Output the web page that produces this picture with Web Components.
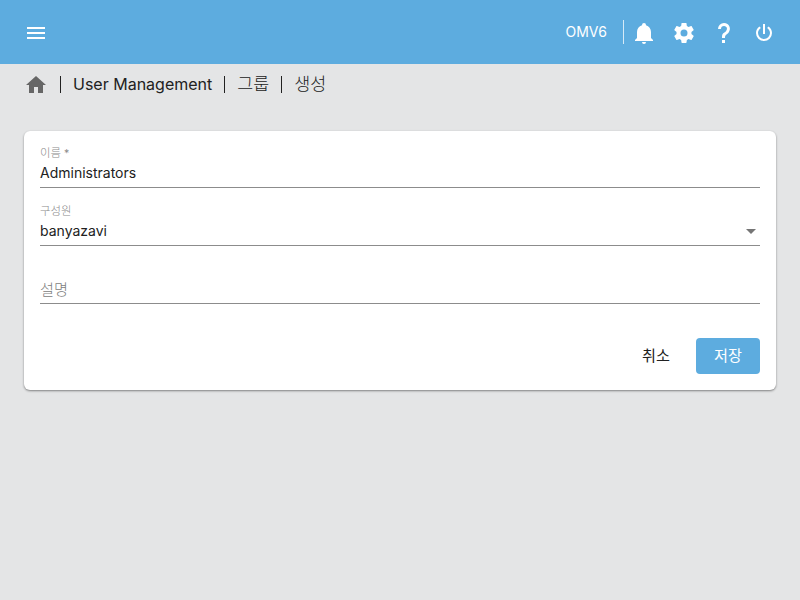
<!DOCTYPE html>
<html><head><meta charset="utf-8"><title>OMV</title>
<style>
html,body{margin:0;padding:0;height:100%}
body{background:#e4e5e6;font-family:Inter,"Noto Sans CJK KR",sans-serif;font-weight:375;color:#212121;overflow:hidden}
</style></head><body>
<omv-app></omv-app>
<script>
const K='.k{font-size:1.087em;font-weight:300}';
function def(name,html,setup){customElements.define(name,class extends HTMLElement{constructor(){super();this.attachShadow({mode:'open'}).innerHTML=html;}connectedCallback(){if(setup)setup(this)}})}
def('omv-icon',`<style>:host{display:block;width:24px;height:24px}svg{display:block;width:100%;height:100%;fill:currentColor}</style><svg viewBox="0 0 24 24"><path id="p"/></svg>`,el=>{el.shadowRoot.getElementById('p').setAttribute('d',el.getAttribute('d'))});
def('omv-topbar',`<style>:host{display:flex;align-items:center;height:64px;background:#5dacdf;color:#fff;padding:0 24px}
omv-icon{margin-top:2px}
.sp{flex:1}.host{font-size:14px;font-weight:400;line-height:20px;margin-right:16px}.div{width:1px;height:24px;background:rgba(255,255,255,.75);margin-right:8px}
.r{display:flex;gap:16px;align-items:center}</style>
<omv-icon d="M3 18h18v-2H3v2zm0-5h18v-2H3v2zm0-7v2h18V6H3z"></omv-icon><div class="sp"></div>
<span class="host">OMV6</span><div class="div"></div>
<div class="r">
<omv-icon d="M21,19V20H3V19L5,17V11C5,7.9 7.03,5.17 10,4.29C10,4.19 10,4.1 10,4A2,2 0 0,1 12,2A2,2 0 0,1 14,4C14,4.1 14,4.19 14,4.29C16.97,5.17 19,7.9 19,11V17L21,19M14,21A2,2 0 0,1 12,23A2,2 0 0,1 10,21"></omv-icon>
<omv-icon d="M12,15.5A3.5,3.5 0 0,1 8.5,12A3.5,3.5 0 0,1 12,8.5A3.5,3.5 0 0,1 15.5,12A3.5,3.5 0 0,1 12,15.5M19.43,12.97C19.47,12.65 19.5,12.33 19.5,12C19.5,11.67 19.47,11.34 19.43,11L21.54,9.37C21.73,9.22 21.78,8.95 21.66,8.73L19.66,5.27C19.54,5.05 19.27,4.96 19.05,5.05L16.56,6.05C16.04,5.66 15.5,5.32 14.87,5.07L14.5,2.42C14.46,2.18 14.25,2 14,2H10C9.75,2 9.54,2.18 9.5,2.42L9.13,5.07C8.5,5.32 7.96,5.66 7.44,6.05L4.95,5.05C4.73,4.96 4.46,5.05 4.34,5.27L2.34,8.73C2.21,8.95 2.27,9.22 2.46,9.37L4.57,11C4.53,11.34 4.5,11.67 4.5,12C4.5,12.33 4.53,12.65 4.57,12.97L2.46,14.63C2.27,14.78 2.21,15.05 2.34,15.27L4.34,18.73C4.46,18.95 4.73,19.03 4.95,18.95L7.44,17.94C7.96,18.34 8.5,18.68 9.13,18.93L9.5,21.58C9.54,21.82 9.75,22 10,22H14C14.25,22 14.46,21.82 14.5,21.58L14.87,18.93C15.5,18.67 16.04,18.34 16.56,17.94L19.05,18.95C19.27,19.03 19.54,18.95 19.66,18.73L21.66,15.27C21.78,15.05 21.73,14.78 21.54,14.63L19.43,12.97Z"></omv-icon>
<omv-icon d="M10,19H13V22H10V19M12,2C17.35,2.22 19.68,7.62 16.5,11.67C15.67,12.67 14.33,13.33 13.67,14.17C13,15 13,16 13,17H10C10,15.33 10,13.92 10.67,12.92C11.33,11.92 12.67,11.33 13.5,10.67C15.92,8.43 15.32,5.26 12,5A3,3 0 0,0 9,8H6A6,6 0 0,1 12,2Z"></omv-icon>
<omv-icon d="M16.56,5.44L15.11,6.89C16.84,7.94 18,9.83 18,12A6,6 0 0,1 12,18A6,6 0 0,1 6,12C6,9.83 7.16,7.94 8.88,6.88L7.44,5.44C5.36,6.88 4,9.28 4,12A8,8 0 0,0 12,20A8,8 0 0,0 20,12C20,9.28 18.64,6.88 16.56,5.44M13,3H11V13H13"></omv-icon>
</div>`);
def('omv-crumbs',`<style>${K}:host{display:flex;align-items:center;height:40px;padding:0 24px;font-size:16px;color:#212121}
omv-icon{color:#666;margin-right:12px;margin-top:2px}
.s{width:1px;height:17px;background:#212121;margin:0 12px 0 0}.t{margin-right:12px;line-height:24px;white-space:nowrap}</style>
<omv-icon d="M10 20v-6h4v6h5v-8h3L12 3 2 12h3v8z"></omv-icon>
<div class="s"></div><span class="t">User Management</span><div class="s"></div><span class="t k">그룹</span><div class="s"></div><span class="t k">생성</span>`);
def('omv-field',`<style>${K}:host{display:block;height:58px;box-sizing:border-box}
.w{box-sizing:border-box;height:57px;border-bottom:1px solid #8c8c8c;display:flex;flex-direction:column;justify-content:flex-end;padding-bottom:4px}
.l{font-size:10.5px;line-height:14px;color:#8a8a8a;height:14px;margin-bottom:3px}
.v{font-size:14px;line-height:20px;height:20px;color:#212121;display:flex;justify-content:space-between;align-items:center}
.v.ph{color:#7d7d7d;padding-top:2px;box-sizing:border-box}
.a{width:0;height:0;border-left:5px solid transparent;border-right:5px solid transparent;border-top:5px solid #757575;margin-right:4px;display:none}
:host([select]) .a{display:block}</style>
<div class="w"><div class="l" id="l"></div><div class="v" id="v"><span id="t"></span><i class="a"></i></div></div>`,el=>{const s=el.shadowRoot;const l=s.getElementById('l');
const lab=el.getAttribute('label')||'';const m=lab.match(/^(\S+)(.*)$/);if(m){const k=document.createElement('span');k.className='k';k.textContent=m[1];l.append(k,m[2]);}
const t=s.getElementById('t');t.textContent=el.getAttribute('value')||el.getAttribute('placeholder')||'';if(!el.getAttribute('value')){s.getElementById('v').classList.add('ph');t.className='k';}});
def('omv-button',`<style>:host{display:block;box-sizing:border-box;height:36px;min-width:64px;padding:0 16px;border-radius:4px;font-size:15.2px;font-weight:400;line-height:36px;text-align:center;color:#212121}
:host([primary]){background:#5dacdf;color:#fff}</style><slot></slot>`);
def('omv-card',`<style>:host{display:block;background:#fff;border-radius:6px;margin:27px 24px 0;padding:0 16px 16px;box-shadow:0 1px 2px rgba(0,0,0,.35),0 1px 3px rgba(0,0,0,.12);height:259px;box-sizing:border-box}
.f{display:flex;flex-direction:column}
.b{display:flex;justify-content:flex-end;gap:8px;margin-top:33px}</style>
<div class="f"><slot></slot></div><div class="b"><slot name="a"></slot></div>`);
def('omv-app',`<style>:host{display:block}</style>
<omv-topbar></omv-topbar><omv-crumbs></omv-crumbs>
<omv-card>
<omv-field label="이름 *" value="Administrators"></omv-field>
<omv-field label="구성원" value="banyazavi" select></omv-field>
<omv-field placeholder="설명"></omv-field>
<omv-button slot="a">취소</omv-button><omv-button slot="a" primary>저장</omv-button>
</omv-card>`);
</script></body></html>
